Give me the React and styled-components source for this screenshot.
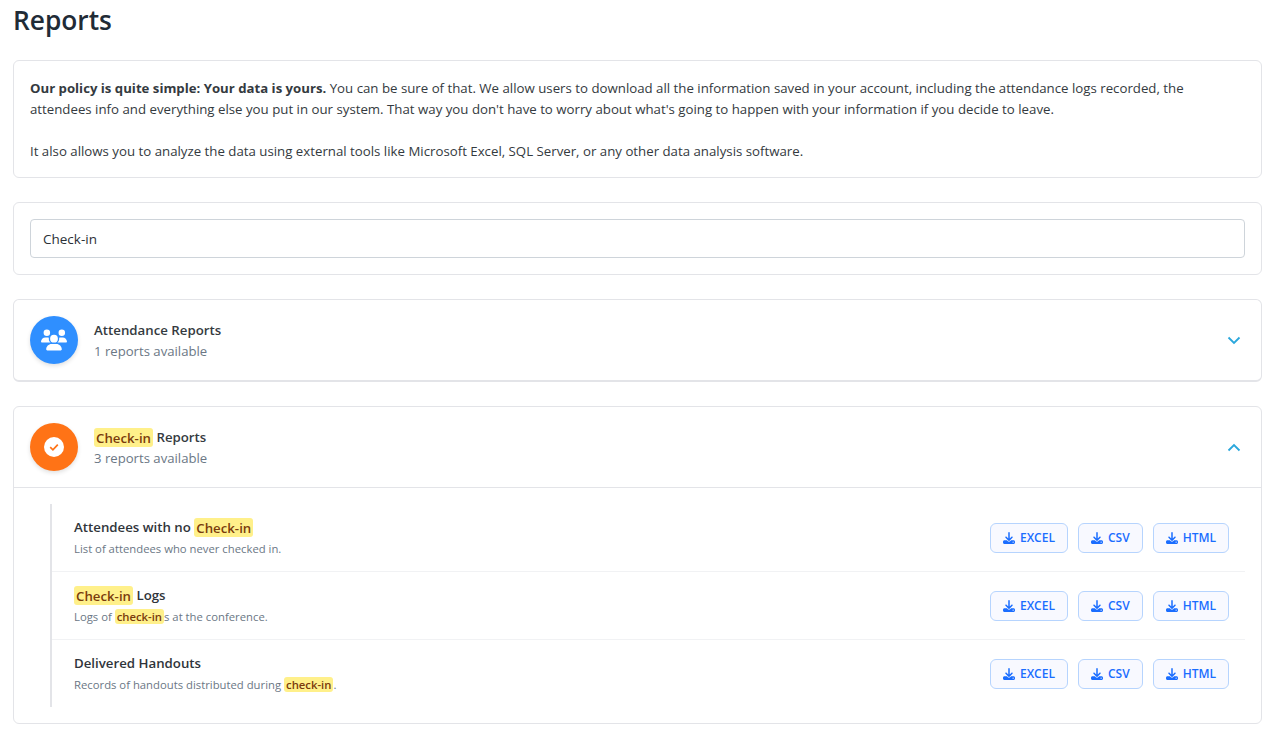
import React from "react";
import styled, { createGlobalStyle } from "styled-components";
import { FaUsers, FaDownload } from "react-icons/fa6";

const GlobalStyle = createGlobalStyle`
  html, body {
    margin: 0;
    background: #fff;
    font-family: "Open Sans", "Noto Sans", "Liberation Sans", sans-serif;
    color: #343a40;
  }
`;

const Page = styled.div`
  padding: 0 13px 6px;
  width: 1249px;
`;

const Title = styled.h1`
  margin: 0 0 22px;
  padding-top: 2px;
  font-size: 26.3px;
  line-height: 36px;
  font-weight: 600;
  color: #212b36;
`;

const Card = styled.div`
  border: 1px solid #e3e4e8;
  border-bottom-width: ${(p) => (p.$thick ? "2px" : "1px")};
  border-radius: 6px;
  background: #fff;
  margin-bottom: 24px;
`;

const Intro = styled.div`
  padding: 17px 16px 15px;
  font-size: 13.25px;
  line-height: 21px;
  color: #343a40;
  p { margin: 0 0 21px; }
  p:last-child { margin: 0; }
  strong { font-weight: 700; font-size: 13.2px; }
`;

const SearchWrap = styled.div`
  padding: 16px;
`;

const SearchInput = styled.input`
  display: block;
  box-sizing: border-box;
  width: 100%;
  height: 39px;
  padding: 0 12px;
  border: 1px solid #ced4da;
  border-radius: 4px;
  font: inherit;
  font-size: 13.5px;
  color: #2b3036;
  outline: none;
`;

const GroupHeader = styled.div`
  display: flex;
  align-items: center;
  height: 80px;
  padding: 0 20px 0 16px;
  border-bottom: ${(p) => (p.$open ? "1px solid #e3e4e8" : "none")};
`;

const IconCircle = styled.div`
  width: 48px;
  height: 48px;
  border-radius: 50%;
  flex: none;
  display: flex;
  align-items: center;
  justify-content: center;
  background: ${(p) => p.$color};
  box-shadow: 0 2px 4px rgba(0, 0, 0, 0.12);
`;

const CheckDisc = styled.svg`
  width: 20px;
  height: 20px;
`;

const GroupText = styled.div`
  margin: 2px 0 0 16px;
  flex: 1;
`;

const GroupTitle = styled.div`
  font-size: 13.25px;
  line-height: 21px;
  font-weight: 600;
  color: #343a40;
`;

const GroupSub = styled.div`
  font-size: 13.15px;
  line-height: 21px;
  color: #6b7785;
`;

const Chevron = styled.svg`
  width: 14px;
  height: 9px;
  fill: none;
  stroke: #2aa7dc;
  stroke-width: 1.8;
`;

const Mark = styled.mark`
  background: #fff08a;
  color: #7a3b0c;
  border-radius: 3px;
  padding: 0.5px 2px;
  font-weight: 600;
  font-size: 13.25px;
`;

const SmallMark = styled.mark`
  background: #fff08a;
  color: #7a3b0c;
  border-radius: 3px;
  padding: 0 2px;
  font-weight: 600;
`;

const RowList = styled.div`
  margin: 16px 16px 16px 36px;
  border-left: 2px solid #e3e4e8;
`;

const Row = styled.div`
  display: flex;
  align-items: center;
  justify-content: space-between;
  height: 67px;
  padding: 0 16px 0 22px;
  border-bottom: ${(p) => (p.$last ? "none" : "1px solid #f1f2f4")};
`;

const RowText = styled.div``;

const RowTitle = styled.div`
  font-size: 13.25px;
  line-height: 21px;
  font-weight: 600;
  color: #2f343a;
`;

const RowDesc = styled.div`
  font-size: 11.3px;
  line-height: 18px;
  margin-top: 2px;
  color: #6b7785;
`;

const Buttons = styled.div`
  display: flex;
  gap: 10px;
`;

const DownloadButton = styled.button`
  display: inline-flex;
  align-items: center;
  gap: 5px;
  height: 30px;
  padding: 0 12px;
  border: 1px solid #b6d4fe;
  border-radius: 6px;
  background: #f8f9ff;
  color: #1a6dff;
  font: inherit;
  font-size: 12px;
  font-weight: 600;
`;

const rows = [
  {
    title: <>Attendees with no <Mark>Check-in</Mark></>,
    desc: <>List of attendees who never checked in.</>,
  },
  {
    title: <><Mark>Check-in</Mark> Logs</>,
    desc: <>Logs of <SmallMark>check-in</SmallMark>s at the conference.</>,
  },
  {
    title: <>Delivered Handouts</>,
    desc: <>Records of handouts distributed during <SmallMark>check-in</SmallMark>.</>,
  },
];

const App = () => {
  return (
    <Page>
      <GlobalStyle />
      <Title>Reports</Title>
      <Card>
        <Intro>
          <p>
            <strong>Our policy is quite simple: Your data is yours.</strong> You can be sure of that. We allow users to download all the information saved in your account, including the attendance logs recorded, the attendees info and everything else you put in our system. That way you don't have to worry about what's going to happen with your information if you decide to leave.
          </p>
          <p>It also allows you to analyze the data using external tools like Microsoft Excel, SQL Server, or any other data analysis software.</p>
        </Intro>
      </Card>
      <Card>
        <SearchWrap>
          <SearchInput defaultValue="Check-in" />
        </SearchWrap>
      </Card>
      <Card $thick>
        <GroupHeader>
          <IconCircle $color="#2f8fff"><FaUsers size={26} color="#fff" /></IconCircle>
          <GroupText>
            <GroupTitle>Attendance Reports</GroupTitle>
            <GroupSub>1 reports available</GroupSub>
          </GroupText>
          <Chevron viewBox="0 0 14 9"><path d="M1.5 1.5 7 7l5.5-5.5" /></Chevron>
        </GroupHeader>
      </Card>
      <Card>
        <GroupHeader $open>
          <IconCircle $color="#ff7316">
            <CheckDisc viewBox="0 0 20 20">
              <circle cx="10" cy="10" r="10" fill="#fff" />
              <path d="M6.2 10.2 8.9 12.8 13.8 7.6" fill="none" stroke="#ff7316" strokeWidth="1.7" />
            </CheckDisc>
          </IconCircle>
          <GroupText>
            <GroupTitle><Mark>Check-in</Mark> Reports</GroupTitle>
            <GroupSub>3 reports available</GroupSub>
          </GroupText>
          <Chevron viewBox="0 0 14 9"><path d="M1.5 7.5 7 2l5.5 5.5" /></Chevron>
        </GroupHeader>
        <RowList>
          {rows.map((r, i) => (
            <Row key={i} $last={i === rows.length - 1}>
              <RowText>
                <RowTitle>{r.title}</RowTitle>
                <RowDesc>{r.desc}</RowDesc>
              </RowText>
              <Buttons>
                {["EXCEL", "CSV", "HTML"].map((b) => (
                  <DownloadButton key={b}>
                    <FaDownload size={12} />
                    {b}
                  </DownloadButton>
                ))}
              </Buttons>
            </Row>
          ))}
        </RowList>
      </Card>
    </Page>
  );
};

export default App;
